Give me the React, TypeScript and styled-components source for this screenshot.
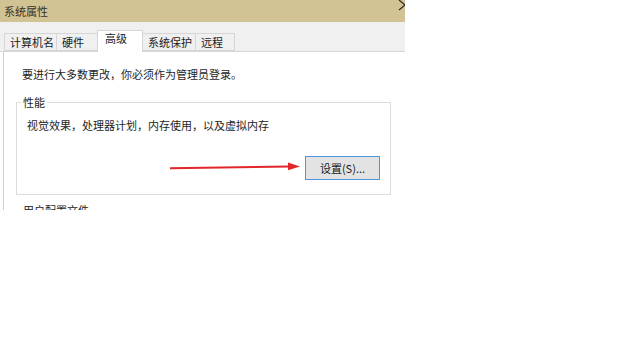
import React from "react";
import styled, { createGlobalStyle } from "styled-components";

const Global = createGlobalStyle`
  html, body { margin: 0; padding: 0; background: #ffffff; }
  body { font-family: "Noto Sans CJK SC", "Noto Sans", sans-serif; }
  * { box-sizing: border-box; }
`;

const Window = styled.div`
  position: relative;
  width: 405px;
  height: 210px;
  overflow: hidden;
  display: flex;
  flex-direction: column;
  font-size: 11px;
  color: #1e1e1e;
`;

const TitleBar = styled.div`
  flex: none;
  height: 22px;
  background: #d2c394;
  display: flex;
  justify-content: space-between;
  align-items: flex-start;
  padding-left: 4px;
`;

const Title = styled.span`
  line-height: 22px;
  color: #36332a;
`;

const CloseIcon = styled.svg`
  flex: none;
  margin-right: -7px;
`;

const TabStrip = styled.div`
  flex: none;
  height: 30px;
  background: #f0f0f0;
  border-bottom: 1px solid #d6d6d6;
  display: flex;
  align-items: flex-end;
  padding-left: 4px;
`;

const Tab = styled.div<{ $w: number; $active?: boolean }>`
  width: ${(p) => p.$w}px;
  height: ${(p) => (p.$active ? 22 : 18)}px;
  margin-bottom: ${(p) => (p.$active ? -1 : 0)}px;
  margin-left: -1px;
  padding-left: ${(p) => (p.$active ? 7 : 5)}px;
  line-height: ${(p) => (p.$active ? 15 : 17)}px;
  background: ${(p) => (p.$active ? "#ffffff" : "#f0f0f0")};
  border: 1px solid #d6d6d6;
  border-bottom: ${(p) => (p.$active ? "none" : "1px solid #d6d6d6")};
  color: #1a1a1a;
  white-space: nowrap;
  position: relative;
  z-index: ${(p) => (p.$active ? 1 : 0)};
  &:first-child { margin-left: 0; }
`;

const Pane = styled.div`
  flex: 1;
  margin-left: 3px;
  border-left: 1px solid #cfcfcf;
  background: #ffffff;
  display: flex;
  flex-direction: column;
  padding-top: 15px;
`;

const Notice = styled.div`
  margin-left: 18px;
  line-height: 14px;
`;

const Group = styled.fieldset<{ $top: number }>`
  width: 375px;
  margin: ${(p) => p.$top}px 0 0 12px;
  padding: 0 0 14px 10px;
  border: 1px solid #dcdcdc;
  min-width: 0;
  flex: none;
`;

const Legend = styled.legend`
  margin-left: -6px;
  padding: 0 2px;
  line-height: 14px;
`;

const Desc = styled.div`
  margin-top: 9px;
  line-height: 14px;
`;

const ButtonRow = styled.div`
  margin-top: 24px;
  display: flex;
  justify-content: flex-end;
  padding-right: 10px;
`;

const Button = styled.div`
  width: 75px;
  height: 24px;
  border: 1px solid #4d97e2;
  background: #e3e3e3;
  display: flex;
  align-items: center;
  justify-content: center;
  color: #1a1a1a;
`;

const Arrow = styled.svg`
  position: absolute;
  left: 165px;
  top: 157px;
  pointer-events: none;
`;

export default function App() {
  return (
    <>
      <Global />
      <Window>
        <TitleBar>
          <Title>系统属性</Title>
          <CloseIcon width="14" height="12" viewBox="0 0 14 12">
            <path d="M1 0 L13 10 M1 10 L13 0" stroke="#2e2b24" strokeWidth="1.2" fill="none" />
          </CloseIcon>
        </TitleBar>
        <TabStrip>
          <Tab $w={53}>计算机名</Tab>
          <Tab $w={42}>硬件</Tab>
          <Tab $w={46} $active>高级</Tab>
          <Tab $w={54}>系统保护</Tab>
          <Tab $w={40}>远程</Tab>
        </TabStrip>
        <Pane>
          <Notice>要进行大多数更改，你必须作为管理员登录。</Notice>
          <Group $top={14}>
            <Legend>性能</Legend>
            <Desc>视觉效果，处理器计划，内存使用，以及虚拟内存</Desc>
            <ButtonRow>
              <Button>设置(S)...</Button>
            </ButtonRow>
          </Group>
          <Group $top={8}>
            <Legend>用户配置文件</Legend>
          </Group>
        </Pane>
        <Arrow width="140" height="20" viewBox="0 0 140 20">
          <path d="M5 11.2 L125 9.6" stroke="#e3262a" strokeWidth="2" fill="none" />
          <polygon points="123,5.5 135,9.4 123,13.3" fill="#e3262a" />
        </Arrow>
      </Window>
    </>
  );
}
